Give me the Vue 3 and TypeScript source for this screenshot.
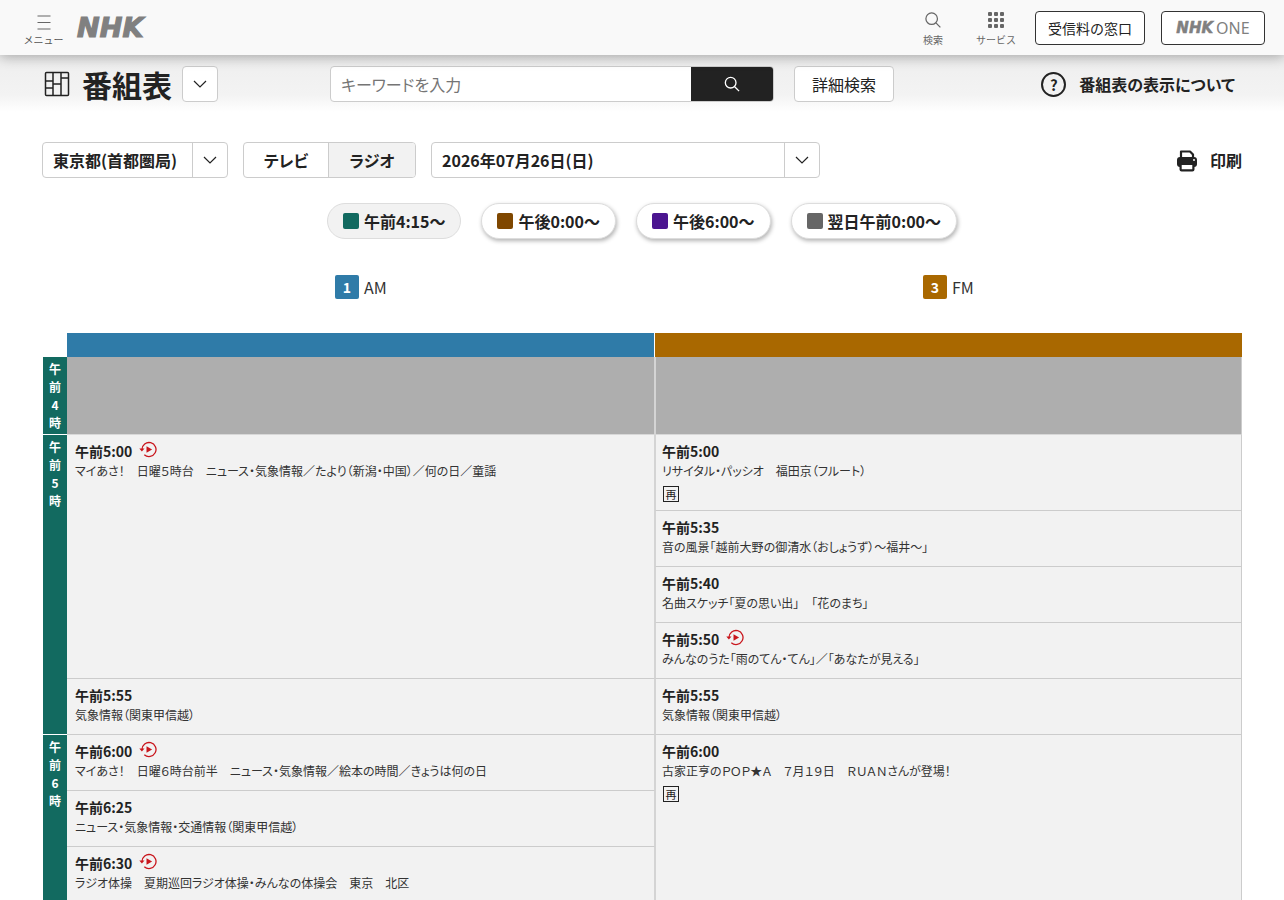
<script setup lang="ts">
interface Program {
  time: string
  title: string
  height: number
  replay?: boolean
  rerun?: boolean
}

const pills = [
  { label: '午前4:15〜', color: '#126a60', active: true },
  { label: '午後0:00〜', color: '#7f4700', active: false },
  { label: '午後6:00〜', color: '#4b1590', active: false },
  { label: '翌日午前0:00〜', color: '#666666', active: false },
]

const hours = [
  { chars: ['午', '前', '4', '時'], height: 78 },
  { chars: ['午', '前', '5', '時'], height: 300 },
  { chars: ['午', '前', '6', '時'], height: 300 },
]

const amPrograms: Program[] = [
  { time: '午前5:00', title: 'マイあさ！　日曜５時台　ニュース・気象情報／たより（新潟・中国）／何の日／童謡', height: 244, replay: true },
  { time: '午前5:55', title: '気象情報（関東甲信越）', height: 56 },
  { time: '午前6:00', title: 'マイあさ！　日曜６時台前半　ニュース・気象情報／絵本の時間／きょうは何の日', height: 56, replay: true },
  { time: '午前6:25', title: 'ニュース・気象情報・交通情報（関東甲信越）', height: 56 },
  { time: '午前6:30', title: 'ラジオ体操　夏期巡回ラジオ体操・みんなの体操会　東京　北区', height: 56, replay: true },
]

const fmPrograms: Program[] = [
  { time: '午前5:00', title: 'リサイタル・パッシオ　福田京（フルート）', height: 76, rerun: true },
  { time: '午前5:35', title: '音の風景「越前大野の御清水（おしょうず）〜福井〜」', height: 56 },
  { time: '午前5:40', title: '名曲スケッチ「夏の思い出」　「花のまち」', height: 56 },
  { time: '午前5:50', title: 'みんなのうた「雨のてん・てん」／「あなたが見える」', height: 56, replay: true },
  { time: '午前5:55', title: '気象情報（関東甲信越）', height: 56 },
  { time: '午前6:00', title: '古家正亨のＰＯＰ★Ａ　７月１９日　ＲＵＡＮさんが登場！', height: 168, rerun: true },
]

const columns = [
  { num: '1', name: 'AM', color: '#2f7ba8', programs: amPrograms },
  { num: '3', name: 'FM', color: '#a96800', programs: fmPrograms },
]
</script>

<template>
  <div class="page">
    <header class="top">
      <button class="top-btn menu">
        <svg width="16" height="15" viewBox="0 0 16 15" fill="none" stroke="#666" stroke-width="1.2">
          <path d="M1.500 1h13M1.500 7.500h13M1.500 14h13" />
        </svg>
        <span>メニュー</span>
      </button>
      <span class="logo">NHK</span>
      <div class="spacer"></div>
      <button class="top-btn search">
        <svg width="16" height="16" viewBox="0 0 18 18" fill="none" stroke="#666" stroke-width="1.4">
          <circle cx="7.500" cy="7.500" r="6.500" />
          <path d="M12.300 12.300l5 5" />
        </svg>
        <span>検索</span>
      </button>
      <button class="top-btn services">
        <svg width="16" height="16" viewBox="0 0 16 16" fill="#666">
          <rect v-for="n in 9" :key="n" :x="(n - 1) % 3 * 6" :y="Math.floor((n - 1) / 3) * 6" width="4" height="4" rx="1" />
        </svg>
        <span>サービス</span>
      </button>
      <a class="outline-btn window">受信料の窓口</a>
      <a class="outline-btn one"><span class="one-mark">NHK</span><span class="one-text">ONE</span></a>
    </header>

    <section class="subhead">
      <svg class="grid-icon" width="26" height="26" viewBox="0 0 26 26" fill="none" stroke="#222" stroke-width="1.500">
        <rect x="1.500" y="1.500" width="23" height="23" rx="1" />
        <path d="M9 1.500v23M17 1.500v23M1.500 10h7.500M1.500 17h7.500M9 13h8M17 7h7.500" />
      </svg>
      <h1>番組表</h1>
      <button class="chev-box title-chev">
        <svg width="14" height="8" viewBox="0 0 14 8" fill="none" stroke="#222" stroke-width="1.2"><path d="M1 1l6 6 6-6" /></svg>
      </button>
      <div class="search-box">
        <span class="placeholder">キーワードを入力</span>
        <span class="search-go">
          <svg width="16" height="16" viewBox="0 0 18 18" fill="none" stroke="#fff" stroke-width="1.500">
            <circle cx="7.500" cy="7.500" r="6" />
            <path d="M12 12l5 5" />
          </svg>
        </span>
      </div>
      <button class="detail">詳細検索</button>
      <div class="spacer"></div>
      <a class="about">
        <span class="about-icon">?</span>
        番組表の表示について
      </a>
    </section>

    <section class="toolbar">
      <div class="select area">
        <span class="select-text">東京都(首都圏局)</span>
        <span class="select-arrow">
          <svg width="14" height="8" viewBox="0 0 14 8" fill="none" stroke="#222" stroke-width="1.2"><path d="M1 1l6 6 6-6" /></svg>
        </span>
      </div>
      <div class="tabs">
        <span class="tab">テレビ</span>
        <span class="tab current">ラジオ</span>
      </div>
      <div class="select date">
        <span class="select-text">2026年07月26日(日)</span>
        <span class="select-arrow">
          <svg width="14" height="8" viewBox="0 0 14 8" fill="none" stroke="#222" stroke-width="1.2"><path d="M1 1l6 6 6-6" /></svg>
        </span>
      </div>
      <div class="spacer"></div>
      <a class="print">
        <svg width="22" height="23" viewBox="0 0 22 23" fill="none">
          <path d="M5 9V2.500h9l3 3V9" stroke="#222" stroke-width="2.200" stroke-linejoin="round" />
          <rect x="1" y="8" width="20" height="10" rx="3" fill="#222" />
          <rect x="4.600" y="15" width="12.800" height="6.400" rx="1" fill="#fff" stroke="#222" stroke-width="2.200" />
          <circle cx="18" cy="11" r="1" fill="#fff" />
        </svg>
        印刷
      </a>
    </section>

    <nav class="pills">
      <a v-for="pill in pills" :key="pill.label" class="pill" :class="{ active: pill.active }">
        <i :style="{ background: pill.color }"></i>{{ pill.label }}
      </a>
    </nav>

    <section class="schedule">
      <div class="channels">
        <div v-for="col in columns" :key="col.num" class="channel">
          <b :style="{ background: col.color }">{{ col.num }}</b>{{ col.name }}
        </div>
      </div>

      <div class="table">
        <div class="rail">
          <div v-for="(hour, i) in hours" :key="i" class="hour" :style="{ height: hour.height + 'px' }">
            <span v-for="c in hour.chars" :key="c">{{ c }}</span>
          </div>
        </div>
        <div v-for="col in columns" :key="col.num" class="col">
          <div class="col-bar" :style="{ background: col.color }"></div>
          <div class="off-air"></div>
          <article
            v-for="prog in col.programs"
            :key="prog.time"
            class="program"
            :style="{ height: prog.height + 'px' }"
          >
            <div class="time">
              {{ prog.time }}
              <svg v-if="prog.replay" class="replay" width="18" height="17" viewBox="0 0 18 17" fill="none">
                <path d="M3 8.500a7 7 0 1 1 2.300 5.200" stroke="#c9161d" stroke-width="1.300" />
                <path d="M0.300 7.400h5.200l-2.600 3z" fill="#c9161d" />
                <path d="M7.500 5.200l5.600 3.300-5.600 3.300z" fill="#c9161d" />
              </svg>
            </div>
            <p class="title">{{ prog.title }}</p>
            <span v-if="prog.rerun" class="rerun">再</span>
          </article>
        </div>
      </div>
    </section>
  </div>
</template>

<style>
html,
body {
  margin: 0;
  background: #fff;
}
</style>

<style scoped>
.page {
  height: 900px;
  overflow: hidden;
  font-family: "Noto Sans CJK JP", "Noto Sans", sans-serif;
  font-feature-settings: "palt";
  color: #222;
}

button {
  font-family: inherit;
  cursor: pointer;
}

.spacer {
  flex: 1;
}

/* header */
.top {
  position: relative;
  z-index: 2;
  height: 55px;
  box-sizing: border-box;
  display: flex;
  align-items: center;
  padding: 0 19px 0 24px;
  background: #f9f9f9;
  box-shadow: 0 2px 12px rgba(0, 0, 0, 0.3);
}

.top-btn {
  display: flex;
  flex-direction: column;
  align-items: center;
  gap: 6px;
  padding: 3px 0 0;
  border: 0;
  background: none;
  font-size: 10px;
  line-height: 12px;
  font-feature-settings: normal;
  white-space: nowrap;
  color: #666;
}

.menu {
  color: #555;
  padding-top: 5px;
  width: 39px;
  gap: 4px;
}

.logo {
  margin-left: 14px;
  margin-top: -1px;
  font-family: "DejaVu Sans", sans-serif;
  font-size: 27px;
  font-weight: 700;
  font-style: italic;
  font-feature-settings: normal;
  letter-spacing: 0.2px;
  color: #808080;
  -webkit-text-stroke: 1.2px #808080;
}

.search {
  margin-right: 33px;
}

.services {
  margin-right: 19px;
}

.outline-btn {
  box-sizing: border-box;
  height: 34px;
  display: flex;
  align-items: center;
  justify-content: center;
  border: 1px solid #333;
  border-radius: 4px;
  background: #fff;
  font-size: 14px;
  font-feature-settings: normal;
}

.window {
  width: 110px;
  margin-right: 16px;
}

.one {
  width: 104px;
  color: #808080;
}

.one-mark {
  font-family: "DejaVu Sans", sans-serif;
  font-size: 15px;
  font-weight: 700;
  font-style: italic;
  -webkit-text-stroke: 0.5px #808080;
}

.one-text {
  margin-left: 3px;
  font-family: "Noto Sans", sans-serif;
  font-size: 16px;
}

/* title band */
.subhead {
  height: 57px;
  box-sizing: border-box;
  display: flex;
  align-items: center;
  padding: 0 49px 0 44px;
  background: linear-gradient(#eeeeee, #f3f3f3 70%, #fff);
}

.grid-icon {
  margin-right: 12px;
}

h1 {
  margin: 0 10px 0 0;
  font-size: 30px;
  line-height: 40px;
  font-weight: 700;
  font-feature-settings: normal;
  color: #222;
}

.chev-box {
  width: 36px;
  height: 36px;
  display: flex;
  align-items: center;
  justify-content: center;
  padding: 0;
  border: 1px solid #ccc;
  border-radius: 4px;
  background: #fff;
}

.search-box {
  display: flex;
  width: 444px;
  height: 36px;
  margin-left: 112px;
  box-sizing: border-box;
  border: 1px solid #ccc;
  border-radius: 4px;
  background: #fff;
  overflow: hidden;
}

.placeholder {
  flex: 1;
  padding-left: 10px;
  font-size: 16px;
  line-height: 34px;
  color: #757575;
}

.search-go {
  width: 82px;
  display: flex;
  align-items: center;
  justify-content: center;
  background: #222;
}

.detail {
  width: 100px;
  height: 36px;
  margin-left: 20px;
  padding: 0;
  border: 1px solid #ccc;
  border-radius: 4px;
  background: #fff;
  font-size: 16px;
  font-feature-settings: normal;
  color: #222;
}

.about {
  display: flex;
  align-items: center;
  gap: 13px;
  font-size: 16px;
  font-weight: 700;
}

.about-icon {
  box-sizing: border-box;
  width: 25px;
  height: 25px;
  margin-top: 1px;
  display: flex;
  align-items: center;
  justify-content: center;
  border: 2px solid #222;
  border-radius: 50%;
  font-size: 15px;
  line-height: 1;
}

/* toolbar */
.toolbar {
  display: flex;
  align-items: center;
  margin-top: 30px;
  padding: 0 42px;
}

.select,
.tabs {
  box-sizing: border-box;
  display: flex;
  height: 36px;
  border: 1px solid #ccc;
  border-radius: 4px;
  font-size: 16px;
  font-weight: 700;
  line-height: 34px;
}

.select-text {
  flex: 1;
  padding-left: 10px;
}

.select-arrow {
  width: 34px;
  display: flex;
  align-items: center;
  justify-content: center;
  border-left: 1px solid #ccc;
}

.area {
  width: 186px;
}

.tabs {
  width: 173px;
  margin-left: 15px;
  overflow: hidden;
}

.tab {
  width: 84px;
  text-align: center;
}

.tab.current {
  flex: 1;
  border-left: 1px solid #ccc;
  background: #f2f2f2;
}

.date {
  width: 389px;
  margin-left: 15px;
}

.print {
  display: flex;
  align-items: center;
  gap: 12px;
  font-size: 16px;
  font-weight: 700;
}

/* time-of-day pills */
.pills {
  display: flex;
  justify-content: center;
  gap: 20px;
  margin-top: 25px;
  font-feature-settings: normal;
}

.pill {
  box-sizing: border-box;
  height: 36px;
  display: flex;
  align-items: center;
  padding: 0 15px;
  border: 1px solid #ddd;
  border-radius: 18px;
  background: #fff;
  box-shadow: 1px 2px 4px rgba(0, 0, 0, 0.3);
  font-size: 16px;
  font-weight: 700;
}

.pill.active {
  background: #f2f2f2;
  box-shadow: none;
}

.pill i {
  width: 16px;
  height: 16px;
  margin-right: 5px;
  border-radius: 2px;
}

/* schedule */
.schedule {
  margin-top: 36px;
  padding: 0 42px 0 43px;
}

.channels {
  display: flex;
  padding-left: 292px;
}

.channel {
  flex: 0 0 588px;
  display: flex;
  align-items: center;
  gap: 5px;
  height: 24px;
  font-size: 16px;
  color: #333;
}

.channel:last-child {
  flex: 1;
}

.channel b {
  width: 24px;
  height: 24px;
  display: flex;
  align-items: center;
  justify-content: center;
  border-radius: 2px;
  font-size: 14px;
  color: #fff;
}

.table {
  display: flex;
  margin-top: 34px;
}

.rail {
  width: 24px;
  padding-top: 24px;
  flex-shrink: 0;
}

.hour {
  box-sizing: border-box;
  display: flex;
  flex-direction: column;
  align-items: center;
  padding-top: 3px;
  border-bottom: 1px solid #fff;
  background: #126a60;
  color: #fff;
  font-size: 12px;
  font-weight: 700;
  line-height: 18px;
}

.col {
  width: 588px;
  flex-shrink: 0;
  box-sizing: border-box;
}

.col:last-child {
  width: 587px;
}

.col:nth-child(2) .col-bar {
  margin-right: 1px;
}

.col-bar {
  height: 24px;
}

.off-air {
  height: 78px;
  box-sizing: border-box;
  border-bottom: 1px solid #d8d8d8;
  background: #aeaeae;
}

.col:nth-child(2) .off-air,
.col:nth-child(2) .program {
  border-right: 1px solid #d4d4d4;
}

.col:last-child .off-air,
.col:last-child .program {
  border-left: 1px solid #d4d4d4;
  border-right: 1px solid #ccc;
}

.program {
  box-sizing: border-box;
  padding: 6px 6px 0 8px;
  border-bottom: 1px solid #ccc;
  background: #f2f2f2;
}

.col:last-child .program {
  padding-left: 6px;
}

.time {
  display: flex;
  align-items: center;
  height: 20px;
  margin-bottom: 1px;
  font-size: 14px;
  font-weight: 700;
  line-height: 20px;
  font-feature-settings: normal;
}

.replay {
  margin-left: 7px;
  margin-top: -3px;
}

.title {
  margin: 0;
  font-size: 12px;
  line-height: 18px;
  color: #333;
}

.rerun {
  display: block;
  box-sizing: border-box;
  width: 16px;
  height: 16px;
  margin: 6px 0 0 1px;
  border: 1px solid #222;
  font-size: 11px;
  line-height: 14px;
  font-feature-settings: normal;
  text-align: center;
}
</style>
